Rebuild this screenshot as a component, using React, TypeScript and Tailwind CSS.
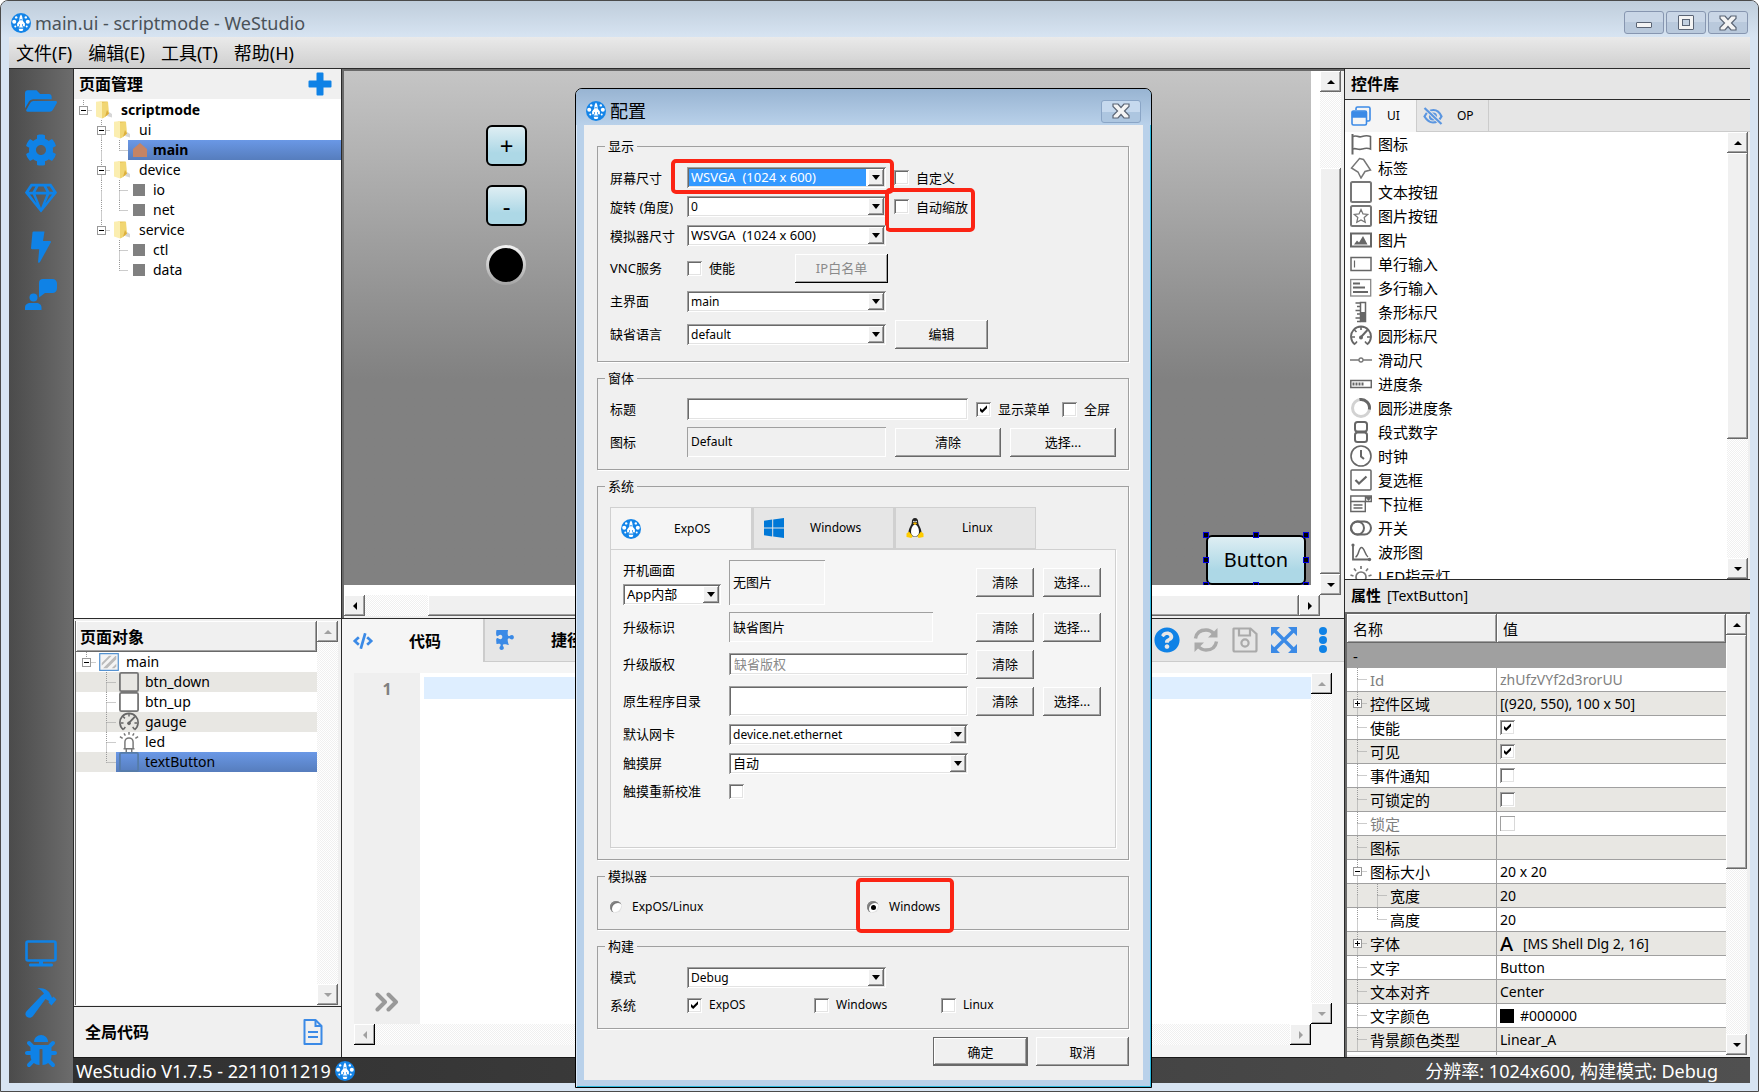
import React, { useState } from 'react';
import clsx from 'clsx';
import { FaFolderOpen, FaCog, FaRegGem, FaHammer, FaBug, FaPuzzlePiece, FaQuestionCircle, FaCode } from 'react-icons/fa';

const SUNKEN = 'shadow-[inset_1px_1px_0_#a0a0a0,inset_-1px_-1px_0_#fff,inset_2px_2px_0_#696969,inset_-2px_-2px_0_#e3e3e3]';
const SUNKEN_THIN = 'shadow-[inset_1px_1px_0_#a0a0a0,inset_-1px_-1px_0_#fff]';
const SUNKEN_MUTED = 'shadow-[inset_1px_1px_0_#a0a0a0,inset_-1px_-1px_0_#d8d8d8]';
const RAISED = 'bg-[#f0f0f0] shadow-[inset_-1px_-1px_0_#696969,inset_1px_1px_0_#fff,inset_-2px_-2px_0_#a0a0a0]';
const RAISED_DARK = 'bg-[#f0f0f0] shadow-[inset_-1px_-1px_0_#000,inset_1px_1px_0_#fff,inset_-2px_-2px_0_#a0a0a0]';
const RAISED_DEFAULT = 'bg-[#f0f0f0] border border-[#696969] shadow-[inset_-1px_-1px_0_#696969,inset_1px_1px_0_#fff,inset_-2px_-2px_0_#a0a0a0]';
const DITHER = 'bg-[repeating-conic-gradient(#fff_0_25%,#f0f0f0_0_50%)] bg-[length:2px_2px]';

/* ---------- icons ---------- */

const Logo = ({ className = 'size-5' }: { className?: string }) => (
  <svg viewBox="0 0 20 20" className={className} aria-hidden="true">
    <circle cx="10" cy="10" r="10" fill="#1384e8" />
    <path d="M10 1.500c1.300 1.500 1.700 3.300 1.600 6l2.300 3v3L12.200 13v1.500H7.800V13l-1.700.5v-3l2.300-3c-.1-2.700.3-4.500 1.600-6z" fill="#fff" />
    <circle cx="10" cy="6.800" r=".8" fill="#1384e8" />
    <path d="M8.500 13.500v-2.500M11.500 13.500v-2.500" stroke="#1384e8" strokeWidth=".7" />
    <circle cx="5.200" cy="4.400" r="1.200" fill="#fff" />
    <circle cx="14.800" cy="4.400" r="1.200" fill="#fff" />
    <circle cx="3.200" cy="8.800" r="2" fill="#fff" />
    <circle cx="16.800" cy="8.800" r="2" fill="#fff" />
    <circle cx="4.300" cy="13.500" r="1" fill="#fff" />
    <circle cx="15.700" cy="13.500" r="1" fill="#fff" />
    <path d="M7.600 15.800h4.800L11.500 18h-3z" fill="#fff" />
  </svg>
);

const Arrow = ({ dir, muted }: { dir: string; muted?: boolean }) => (
  <svg viewBox="0 0 10 10" className="size-[10px]" fill={muted ? '#a0a0a0' : '#000'} aria-hidden="true">
    {dir === 'up' && <path d="M1 7l4-4 4 4z" />}
    {dir === 'down' && <path d="M1 3l4 4 4-4z" />}
    {dir === 'left' && <path d="M7 1L3 5l4 4z" />}
    {dir === 'right' && <path d="M3 1l4 4-4 4z" />}
  </svg>
);

const FolderIcon = () => (
  <svg viewBox="0 0 18 18" className="size-[18px]" aria-hidden="true">
    <path d="M12 15l5 1.500V13l-3-2z" fill="#bbb" opacity=".6" />
    <path d="M5 .5h7.500V14L7 17V3z" fill="#e8c65a" />
    <path d="M1 .8L7 0v17.500L1 15.500z" fill="#fbeeb0" />
    <path d="M7 2l6-1.200 1 11.700-5 4.300L7 17.500z" fill="#f1d673" />
    <path d="M12 9l2 3.500-4 3.500z" fill="#dcae3d" />
  </svg>
);

const HouseIcon = () => (
  <svg viewBox="0 0 14 14" className="size-[14px]" aria-hidden="true">
    <path d="M7 0l7 6v8H0V6z" fill="#c58464" />
  </svg>
);

const BoltIcon = () => (
  <svg viewBox="0 0 32 32" className="size-8" fill="currentColor" aria-hidden="true">
    <path d="M8.500.5h11L18 10h7.200a.8.8 0 0 1 .7 1.200L15 31c-.6 1.200-2 1-1.900-.2L14.200 18.200H7a1 1 0 0 1-1-1.200L7.500 1.300a1 1 0 0 1 1-.8z" />
  </svg>
);

const FeedbackIcon = () => (
  <svg viewBox="0 0 32 32" className="size-8" fill="currentColor" aria-hidden="true">
    <path d="M18 0h9.500A4.500 4.500 0 0 1 32 4.500v5a4.500 4.500 0 0 1-4.500 4.500H20l-6 4.500V4a4 4 0 0 1 4-4z" />
    <circle cx="8.500" cy="18.500" r="4" />
    <path d="M0 31v-2.500C0 25.500 2.500 24 5 24h6.500c2.500 0 5 1.500 5 4.500V31z" />
  </svg>
);

const DisplayIcon = () => (
  <svg viewBox="0 0 32 28" className="w-8 h-7" aria-hidden="true">
    <rect x="1.500" y="1.500" width="29" height="19" rx="1.500" fill="none" stroke="currentColor" strokeWidth="2.600" />
    <path d="M14 20h4v3.500h8.500c1 0 1.500.6 1.500 1.500s-.5 1.500-1.500 1.500h-21C4.500 26.500 4 26 4 25s.5-1.500 1.500-1.500H14z" fill="currentColor" />
  </svg>
);

const GaugeShape = () => (
  <g fill="none" stroke="#666">
    <path d="M5 19.500A10 10 0 1 1 17 19.500" strokeWidth="1.800" />
    <path d="M11 2v3M4.500 5l2 2M2 12h3M20 12h-3M5 19l2-2.500M17 19l-2-2.500" strokeWidth="1.600" />
    <path d="M17.500 5L11 12" strokeWidth="2" />
    <circle cx="11" cy="12.500" r="2" fill="#666" stroke="none" />
  </g>
);

const LedShape = () => (
  <g fill="none" stroke="#777" strokeWidth="1.600">
    <path d="M6.500 18V11a4.500 4.500 0 0 1 9 0v7M5 18.500h12M8 19v3M14 19v3" />
    <path d="M11 0v3M5.500 1.500L7 4M16.500 1.500L15 4M1 5l3 2M21 5l-3 2" />
  </g>
);

const shapes: Record<string, React.ReactNode> = {
  flag: (
    <g fill="none" stroke="#666" strokeWidth="1.600">
      <path d="M2.500 1v20.500" strokeWidth="2" />
      <path d="M3 3.500c3-2 5 1.500 9 0 3-1 5-1.500 8.500 0V16c-3.500-1.500-5-1-8.500 0-4 1.500-6-1.500-9 0" />
    </g>
  ),
  tag: <path d="M9.500 1.500l4 1L20.500 13l-5.500 1.500-4 6.500-3-6L1.500 11z" fill="none" stroke="#777" strokeWidth="1.500" />,
  button: <rect x="1" y="1" width="20" height="20" rx="1.500" fill="none" stroke="#777" strokeWidth="2" />,
  imageButton: (
    <g fill="none" stroke="#777">
      <rect x="1" y="1" width="20" height="20" rx="1.500" strokeWidth="2" />
      <path d="M11 4.500l2 4.400 4.700.5-3.500 3.200 1 4.700-4.200-2.400-4.200 2.400 1-4.700-3.500-3.200 4.700-.5z" strokeWidth="1.300" />
    </g>
  ),
  image: (
    <g>
      <rect x="1" y="4.500" width="20" height="13" fill="none" stroke="#666" strokeWidth="2" />
      <path d="M4 15.500l3-4 2 2L13 7l4.500 8.500z" fill="#666" />
    </g>
  ),
  input: (
    <g fill="none" stroke="#666" strokeWidth="1.500">
      <rect x="1" y="4.500" width="20" height="13" />
      <path d="M4.500 7.500v7" strokeWidth="1.200" />
    </g>
  ),
  textarea: (
    <g>
      <rect x=".7" y="2.500" width="20" height="16.500" fill="none" stroke="#888" strokeWidth="1.300" />
      <path d="M3 6.500h7M3 10.500h12M3 15h15" stroke="#666" strokeWidth="2" />
    </g>
  ),
  ruler: (
    <g>
      <path d="M10.500 1.500h5v19h-5z" fill="none" stroke="#666" strokeWidth="1.500" />
      <path d="M11 11h4.500v10H11z" fill="#666" />
      <path d="M5.500 2h5M7 5.500h3.500M5.500 9.500h5M7 13h3.500M5.500 17h5M7 20.500h3.500" stroke="#666" strokeWidth="1.500" />
    </g>
  ),
  gauge: <GaugeShape />,
  slider: (
    <g fill="none" stroke="#777" strokeWidth="1.300">
      <path d="M0 11h9M13 11h9" />
      <circle cx="11" cy="11" r="2" />
    </g>
  ),
  progress: (
    <g>
      <rect x=".8" y="7.500" width="20.500" height="7" fill="none" stroke="#666" strokeWidth="1.500" />
      <path d="M3.500 9.500v3M6.500 9.500v3M9.500 9.500v3M12.500 9.500v3" stroke="#666" strokeWidth="2" />
    </g>
  ),
  ring: (
    <g fill="none" strokeWidth="3">
      <circle cx="11" cy="11" r="8.500" stroke="#d2d2d2" />
      <path d="M9.500 2.600A8.500 8.500 0 0 1 19.400 12.500" stroke="#666" />
    </g>
  ),
  segment: (
    <g fill="none" stroke="#666" strokeWidth="2">
      <rect x="5" y="1" width="12" height="9.500" rx="2.500" />
      <rect x="5" y="11.500" width="12" height="9.500" rx="2.500" />
    </g>
  ),
  clock: (
    <g fill="none" stroke="#666" strokeWidth="1.600">
      <circle cx="11" cy="11" r="10" />
      <path d="M11 5v6.500l3 2.500" strokeWidth="2" />
    </g>
  ),
  checkbox: (
    <g fill="none" stroke="#666">
      <rect x="1" y="1" width="20" height="20" rx="1" strokeWidth="1.500" />
      <path d="M5.500 11l3.500 3.500 7.500-7" strokeWidth="2.200" />
    </g>
  ),
  dropdown: (
    <g fill="none" stroke="#666" strokeWidth="1.400">
      <path d="M.8 3h20.500v5.500H.8z" />
      <path d="M.8 8.500v10h14.500v-10M3.500 12h9M3.500 15h9M15.500 3v5.500" />
      <path d="M16 4h5l-2.500 3z" fill="#666" />
    </g>
  ),
  toggle: (
    <g fill="none" stroke="#666" strokeWidth="2">
      <rect x="1" y="4.500" width="20" height="13" rx="6.500" />
      <circle cx="7.500" cy="11" r="6.500" />
    </g>
  ),
  chart: (
    <g fill="none" stroke="#666" strokeWidth="1.500">
      <path d="M3 4v14.500h17" strokeWidth="1.800" />
      <path d="M5.500 16c3.500-1 3-9.500 6-9.500s3 7 6.500 9.500" />
      <circle cx="3" cy="4" r="1.600" fill="#666" stroke="none" />
      <circle cx="19.500" cy="18.500" r="1.700" fill="#666" stroke="none" />
    </g>
  ),
  light: (
    <g fill="none" stroke="#777" strokeWidth="1.700">
      <circle cx="11" cy="12" r="5" />
      <path d="M11 1v3M4 3.500l2 2.500M18 3.500L16 6M.5 10l3 1M21.500 10l-3 1" />
    </g>
  ),
  led: <LedShape />,
  page: (
    <g>
      <rect x=".8" y="1.800" width="20.400" height="18.400" fill="#f4f4f4" stroke="#4f8fcf" strokeWidth="1.300" />
      <path d="M3 12L11 4h3L3 15zM4.500 18L18 4.500h1V8L9 18zM14 18l5-5v3l-2 2z" fill="#bbb" />
    </g>
  ),
  buttonBlue: <rect x="1" y="1" width="20" height="20" rx="1.500" fill="none" stroke="#567ca8" strokeWidth="2" />,
};

const Glyph = ({ name, className = 'size-[22px]' }: { name: string; className?: string }) => (
  <svg viewBox="0 0 22 22" className={className} aria-hidden="true">
    {shapes[name]}
  </svg>
);

const CloseGlyph = () => (
  <svg viewBox="0 0 18 16" className="w-[18px] h-4" aria-hidden="true">
    <path d="M1 1h5l3 3.500L12 1h5v2.500L12.500 8l4.500 4.500V15h-5l-3-3.500L6 15H1v-2.500L5.500 8 1 3.500z" fill="#f4f4f4" stroke="#5a6474" strokeWidth="1.200" />
  </svg>
);

/* ---------- shared controls ---------- */

type ScrollProps = { vertical?: boolean; muted?: boolean; dark?: boolean; before?: string; thumb?: string; after?: string };

const ScrollBar = ({ vertical, muted, dark, before, thumb, after }: ScrollProps) => {
  const btn = clsx('size-[21px] shrink-0 flex items-center justify-center', dark ? RAISED_DARK : RAISED);
  return (
    <div className={clsx('flex shrink-0', DITHER, vertical ? 'flex-col w-[21px]' : 'h-[21px]')}>
      <button type="button" aria-label={vertical ? 'up' : 'left'} className={btn}>
        <Arrow dir={vertical ? 'up' : 'left'} muted={muted} />
      </button>
      {before && <div className={before} />}
      {thumb && <div className={clsx(RAISED, thumb)} />}
      {after && <div className={after} />}
      <button type="button" aria-label={vertical ? 'down' : 'right'} className={btn}>
        <Arrow dir={vertical ? 'down' : 'right'} muted={muted} />
      </button>
    </div>
  );
};

const Check = ({ id, checked, disabled }: { id: string; checked?: boolean; disabled?: boolean }) => (
  <span className="relative inline-flex size-[15px] shrink-0">
    <input
      id={id}
      type="checkbox"
      defaultChecked={checked}
      disabled={disabled}
      className={clsx('peer appearance-none size-[15px] bg-white', disabled ? SUNKEN_MUTED : SUNKEN)}
    />
    <svg viewBox="0 0 15 15" className="absolute inset-0 hidden peer-checked:block pointer-events-none" aria-hidden="true">
      <path d="M4 6v3l2.200 2L11 6.200v-3L6.200 8z" fill="#000" />
    </svg>
  </span>
);

const LabeledCheck = ({ id, text, checked, className }: { id: string; text: string; checked?: boolean; className?: string }) => (
  <label htmlFor={id} className={clsx('flex items-center gap-[7px]', className)}>
    <Check id={id} checked={checked} />
    {text}
  </label>
);

const Radio = ({ id, text, checked }: { id: string; text: string; checked?: boolean }) => (
  <label htmlFor={id} className="relative flex items-center gap-[10px] h-5 text-xs">
    <span className="relative inline-flex size-3">
      <input
        id={id}
        type="radio"
        name="simulator"
        defaultChecked={checked}
        className="peer appearance-none size-3 rounded-full bg-white shadow-[inset_1px_1px_0_#888,inset_2px_2px_0_#777,inset_-1px_-1px_0_#e3e3e3]"
      />
      <span className="absolute left-1 top-1 size-[5px] rounded-full bg-black hidden peer-checked:block" />
    </span>
    {text}
    {checked && <span className="absolute -left-[11px] -right-[14px] -top-[19px] -bottom-4 border-4 border-[#fb2414] rounded-[5px] pointer-events-none" />}
  </label>
);

const Combo = ({ id, value, className, active }: { id: string; value: string; className: string; active?: boolean }) => (
  <span className={clsx('relative flex h-[21px] p-[2px] bg-white', SUNKEN, className)}>
    <select
      id={id}
      defaultValue={value}
      className={clsx('appearance-none flex-1 min-w-0 leading-[17px] outline-none pl-[2px] mr-[18px]', active ? 'bg-[#3399ff] text-white' : 'bg-transparent')}
    >
      <option>{value}</option>
    </select>
    <span className={clsx('absolute right-[2px] top-[2px] bottom-[2px] w-4 flex items-center justify-center pointer-events-none', RAISED)}>
      <svg viewBox="0 0 8 5" className="w-2 h-[5px]" aria-hidden="true">
        <path d="M0 0h8L4 5z" />
      </svg>
    </span>
  </span>
);

const PushButton = ({ text, className, kind = RAISED, disabled }: { text: string; className: string; kind?: string; disabled?: boolean }) => (
  <button type="button" disabled={disabled} className={clsx('h-[29px] shrink-0', kind, className, disabled && 'text-[#8a8a8a]')}>
    {text}
  </button>
);

const Group = ({ title, className, children }: { title: string; className?: string; children: React.ReactNode }) => (
  <fieldset className={clsx('border border-[#a0a0a0] min-w-0 px-3 shadow-[1px_1px_0_#fff]', className)}>
    <legend className="-ml-[5px] px-[3px] leading-4">{title}</legend>
    {children}
  </fieldset>
);

const Row = ({ label, htmlFor, h, wide, children }: { label: string; htmlFor?: string; h: string; wide?: boolean; children: React.ReactNode }) => (
  <div className={clsx('flex items-center', h)}>
    <label htmlFor={htmlFor} className={clsx('shrink-0', wide ? 'w-[106px]' : 'w-[77px]')}>{label}</label>
    {children}
  </div>
);

/* ---------- tree ---------- */

type GuideProps = { h: number; w: number; up?: boolean; down?: boolean; across?: boolean; box?: 'plus' | 'minus' };

const Guide = ({ h, w, up, down, across, box }: GuideProps) => {
  const cx = Math.floor(w / 2) + 0.5;
  const cy = Math.floor(h / 2) + 0.5;
  return (
    <svg width={w} height={h} className="shrink-0" aria-hidden="true">
      <g stroke="#999" strokeDasharray="1 1">
        {up && <path d={`M${cx} 0V${cy}`} />}
        {down && <path d={`M${cx} ${cy}V${h}`} />}
        {across && <path d={`M${cx} ${cy}H${w}`} />}
      </g>
      {box && (
        <g fill="#fff" stroke="#999">
          <rect x={cx - 4} y={cy - 4} width="8" height="8" />
          <path d={`M${cx - 2.5} ${cy}h5`} stroke="#000" />
          {box === 'plus' && <path d={`M${cx} ${cy - 2.5}v5`} stroke="#000" />}
        </g>
      )}
    </svg>
  );
};

const pageTree = [
  { name: 'scriptmode', level: 0, bold: true },
  { name: 'ui', level: 1, more: true },
  { name: 'main', level: 2, more: true, last: true, bold: true, selected: true },
  { name: 'device', level: 1, more: true },
  { name: 'io', level: 2, more: true },
  { name: 'net', level: 2, more: true, last: true },
  { name: 'service', level: 1, more: false },
  { name: 'ctl', level: 2, more: false },
  { name: 'data', level: 2, more: false, last: true },
];

const PageTree = () => (
  <ul className="flex-1 bg-white text-sm pt-px">
    {pageTree.map((n) => (
      <li key={n.name} className="flex h-5">
        {n.level === 0 ? (
          <Guide w={18} h={20} up across box="minus" />
        ) : (
          <span className="w-[18px] shrink-0" />
        )}
        {n.level === 1 && <Guide w={18} h={20} up down={n.more} across box="minus" />}
        {n.level === 2 && (
          <>
            <Guide w={18} h={20} up={n.more} down={n.more} />
            <Guide w={18} h={20} up down={!n.last} across />
          </>
        )}
        <div className={clsx('flex-1 flex items-center', n.selected && 'bg-linear-to-b from-[#6a98e6] to-[#567dbd]')}>
          {n.level < 2 ? (
            <span className="w-[29px] pl-[3px]"><FolderIcon /></span>
          ) : (
            <span className="w-[25px] pl-[5px]">
              {n.selected ? <HouseIcon /> : <span className="block size-3 bg-[#808080]" />}
            </span>
          )}
          <span className={clsx(n.bold && 'font-bold')}>{n.name}</span>
        </div>
      </li>
    ))}
  </ul>
);

const objects = [
  { name: 'btn_down', icon: 'button' },
  { name: 'btn_up', icon: 'button' },
  { name: 'gauge', icon: 'gauge' },
  { name: 'led', icon: 'led' },
  { name: 'textButton', icon: 'buttonBlue' },
];

const ObjectTree = () => (
  <ul className="text-sm">
    <li className="flex h-5">
      <Guide w={20} h={20} up across box="minus" />
      <span className="w-[30px] pl-[3px] flex items-center"><Glyph name="page" className="size-5" /></span>
      main
    </li>
    {objects.map((o, i) => (
      <li key={o.name} className={clsx('flex h-5', i % 2 === 0 && 'bg-[#e8e7e3]')}>
        <span className="w-5" />
        <Guide w={20} h={20} up down={i < 4} across />
        <div className={clsx('flex-1 flex items-center', o.name === 'textButton' && 'bg-linear-to-b from-[#6a98e6] to-[#567dbd]')}>
          <span className="w-[29px] pl-[3px]"><Glyph name={o.icon} className="size-5" /></span>
          {o.name}
        </div>
      </li>
    ))}
  </ul>
);

const LeftPanel = () => (
  <section className="w-[269px] shrink-0 flex flex-col border-x border-[#2a2a2a] bg-[#f0f0f0]">
    <div className="h-[30px] flex items-center justify-between pl-[5px] pr-[9px]">
      <h2 className="text-base font-bold">页面管理</h2>
      <button type="button" aria-label="add" className="text-[#0f82e6]">
        <svg viewBox="0 0 24 24" className="size-6" fill="currentColor" aria-hidden="true">
          <path d="M8.500 1.500a1 1 0 0 1 1-1h5a1 1 0 0 1 1 1v7h7a1 1 0 0 1 1 1v5a1 1 0 0 1-1 1h-7v7a1 1 0 0 1-1 1h-5a1 1 0 0 1-1-1v-7h-7a1 1 0 0 1-1-1v-5a1 1 0 0 1 1-1h7z" />
        </svg>
      </button>
    </div>
    <PageTree />
    <div className="h-[388px] border-t border-[#2a2a2a] pt-[2px] pl-px pr-[3px] pb-px flex bg-[#f0f0f0]">
      <div className="flex-1 bg-white border-l border-[#696969]">
        <div className={clsx('h-[31px] flex items-center pl-1', RAISED)}>
          <h2 className="text-base font-bold">页面对象</h2>
        </div>
        <ObjectTree />
      </div>
      <ScrollBar vertical muted after="flex-1" />
    </div>
    <div className="h-[51px] border-t border-[#2a2a2a] flex items-center justify-between pl-[11px] pr-[18px]">
      <h2 className="text-base font-bold">全局代码</h2>
      <button type="button" aria-label="global code">
        <svg viewBox="0 0 20 26" className="w-5 h-[26px]" fill="none" stroke="#3b8ae6" strokeWidth="2" aria-hidden="true">
          <path d="M1.500 1h11L18.500 7v18h-17z" strokeLinejoin="round" />
          <path d="M12.500 1v6h6M5 13h10M5 18h10" />
        </svg>
      </button>
    </div>
  </section>
);

/* ---------- center ---------- */

const handlePos = [
  '-left-[3px] -top-[3px]', 'left-[47px] -top-[3px]', '-right-[3px] -top-[3px]',
  '-left-[3px] top-[22px]', '-right-[3px] top-[22px]',
  '-left-[3px] -bottom-[3px]', 'left-[47px] -bottom-[3px]', '-right-[3px] -bottom-[3px]',
];

const stageButton = 'absolute border-2 border-black rounded-md bg-linear-to-b from-[#deeef3] via-[#add8e6] via-70% to-[#add8e6] leading-none';

const Designer = () => (
  <div className="flex-1 min-h-0 flex flex-col border-t-2 border-l-2 border-[#696969] bg-[#f0f0f0] pr-[3px] pb-[2px]">
    <div className="flex-1 flex min-h-0">
      <div className="flex-1 bg-white pr-[9px] pb-[10px] flex">
        <div className="relative flex-1 overflow-hidden bg-linear-to-b from-[#c5c5c5] to-[#818181] to-60%">
          <button type="button" className={clsx(stageButton, 'left-[142px] top-[54px] size-[41px] text-2xl/6')}>+</button>
          <button type="button" className={clsx(stageButton, 'left-[142px] top-[114px] size-[41px] text-2xl/6')}>-</button>
          <div className="absolute left-[142px] top-[174px] size-10 rounded-full bg-linear-to-b from-[#f4f4f4] to-[#a4a4a4] p-[3px]">
            <div className="size-full rounded-full bg-black" />
          </div>
          <div className="absolute right-[5px] bottom-0 w-[100px] h-[50px]">
            <button type="button" className={clsx(stageButton, 'inset-0 text-xl')}>Button</button>
            {handlePos.map((p) => (
              <span key={p} className={clsx('absolute size-[6px] bg-black border border-[#0000e0]', p)} />
            ))}
          </div>
        </div>
      </div>
      <ScrollBar vertical before="h-[76px]" thumb="flex-1" />
    </div>
    <div className="flex">
      <div className="flex-1 grid"><ScrollBar before="w-[63px]" thumb="flex-1" /></div>
      <div className="size-[21px]" />
    </div>
  </div>
);

const toolButton = 'size-[26px] flex items-center justify-center';

const CodePanel = () => (
  <div className="h-[439px] shrink-0 flex flex-col border-t border-[#2a2a2a] bg-[#f5f5f5]">
    <div className="h-[43px] flex bg-[#e6e6e6]">
      <button type="button" className="w-[141px] flex items-center pl-[11px] gap-9 bg-[#f5f5f5] text-base font-bold">
        <FaCode className="size-5 text-[#3b8ae6]" />代码
      </button>
      <button type="button" className="w-[141px] flex items-center pl-[10px] gap-9 border-l-2 border-b border-[#ccc] text-base font-bold">
        <FaPuzzlePiece className="size-5 rotate-90 text-[#3b8ae6]" />捷径
      </button>
      <div className="flex-1 flex items-center justify-end gap-[13px] pr-2 border-b border-[#ccc]">
        <button type="button" aria-label="help" className={toolButton}><FaQuestionCircle className="size-[26px] text-[#0f82e6]" /></button>
        <button type="button" aria-label="refresh" className={toolButton}>
          <svg viewBox="0 0 26 26" className="size-[26px]" fill="none" stroke="#aaa" strokeWidth="3.400" aria-hidden="true">
            <path d="M2.500 11.500C3.500 5.500 8 3 13 3c3.500 0 6 1.500 8 4M23.500 14.500C22.500 20.500 18 23 13 23c-3.500 0-6-1.500-8-4" />
            <path d="M24.500 1v9.500H15zM1.500 25v-9.500H11z" fill="#aaa" stroke="none" />
          </svg>
        </button>
        <button type="button" aria-label="save" className={toolButton}>
          <svg viewBox="0 0 26 26" className="size-[26px]" fill="none" stroke="#aaa" strokeWidth="2.200" aria-hidden="true">
            <path d="M2 1.500h16.500L24.500 7v16a1.500 1.500 0 0 1-1.500 1.500H3A1.500 1.500 0 0 1 1.500 23V2z" />
            <path d="M7 2v6.500h11V2" />
            <circle cx="13" cy="16" r="3.600" />
          </svg>
        </button>
        <button type="button" aria-label="expand" className={toolButton}>
          <svg viewBox="0 0 26 26" className="size-[26px]" aria-hidden="true">
            <path d="M4 4l18 18M22 4L4 22" stroke="#3b8ae6" strokeWidth="3.400" />
            <path d="M0 0h9L0 9zM26 0v9l-9-9zM0 26v-9l9 9zM26 26h-9l9-9z" fill="#3b8ae6" />
          </svg>
        </button>
        <button type="button" aria-label="more" className={toolButton}>
          <svg viewBox="0 0 26 26" className="size-[26px]" fill="#0f82e6" aria-hidden="true">
            <circle cx="13" cy="4" r="4" /><circle cx="13" cy="13" r="4" /><circle cx="13" cy="22" r="4" />
          </svg>
        </button>
      </div>
    </div>
    <div className="flex-1 flex flex-col pl-3 pr-3 pt-[11px] pb-3">
      <div className="flex-1 flex">
        <div className="w-[66px] bg-[#efefef] flex flex-col items-center justify-between pt-1 pb-3">
          <span className="font-bold text-base text-[#808080]">1</span>
          <svg viewBox="0 0 24 20" className="w-6 h-5" fill="none" stroke="#999" strokeWidth="4" strokeLinecap="round" strokeLinejoin="round" aria-hidden="true">
            <path d="M2.500 2.500L10 10l-7.500 7.500M13.500 2.500L21 10l-7.500 7.500" />
          </svg>
        </div>
        <div className="flex-1 bg-white pt-1 pl-1"><div className="h-[22px] bg-[#deeeff]" /></div>
        <ScrollBar vertical muted dark after="flex-1" />
      </div>
      <div className="flex">
        <div className="flex-1 grid"><ScrollBar muted dark after="flex-1" /></div>
        <div className="size-[21px]" />
      </div>
    </div>
  </div>
);

/* ---------- right ---------- */

const widgets = [
  ['flag', '图标'], ['tag', '标签'], ['button', '文本按钮'], ['imageButton', '图片按钮'], ['image', '图片'],
  ['input', '单行输入'], ['textarea', '多行输入'], ['ruler', '条形标尺'], ['gauge', '圆形标尺'], ['slider', '滑动尺'],
  ['progress', '进度条'], ['ring', '圆形进度条'], ['segment', '段式数字'], ['clock', '时钟'], ['checkbox', '复选框'],
  ['dropdown', '下拉框'], ['toggle', '开关'], ['chart', '波形图'], ['light', 'LED指示灯'],
];

type Prop = { name: string; value?: string; check?: boolean; muted?: boolean; box?: 'plus' | 'minus'; child?: boolean; last?: boolean; font?: boolean; swatch?: boolean };

const props: Prop[] = [
  { name: 'Id', value: 'zhUfzVYf2d3rorUU', muted: true },
  { name: '控件区域', value: '[(920, 550), 100 x 50]', box: 'plus' },
  { name: '使能', check: true },
  { name: '可见', check: true },
  { name: '事件通知', check: false },
  { name: '可锁定的', check: false },
  { name: '锁定', check: false, muted: true },
  { name: '图标' },
  { name: '图标大小', value: '20 x 20', box: 'minus' },
  { name: '宽度', value: '20', child: true },
  { name: '高度', value: '20', child: true, last: true },
  { name: '字体', value: '[MS Shell Dlg 2, 16]', box: 'plus', font: true },
  { name: '文字', value: 'Button' },
  { name: '文本对齐', value: 'Center' },
  { name: '文字颜色', value: '#000000', swatch: true },
  { name: '背景颜色类型', value: 'Linear_A' },
];

const PropertyTable = () => (
  <table className="w-full table-fixed border-separate border-spacing-0 text-[15px] leading-5">
    <thead>
      <tr className="h-[29px] text-left">
        <th className={clsx('w-[150px] pl-[6px] font-normal', RAISED)}>名称</th>
        <th className={clsx('pl-[6px] font-normal', RAISED)}>值</th>
      </tr>
    </thead>
    <tbody>
      <tr className="h-[25px] bg-[#a0a0a0]"><td colSpan={2} className="pl-[6px] py-0">-</td></tr>
      {props.map((p, i) => (
        <tr key={p.name} className={clsx('h-6', i % 2 === 1 && 'bg-[#e8e7e3]', p.muted && 'text-[#808080]')}>
          <td className="p-0 h-6 border-b border-r border-[#a0a0a0]">
            <div className="flex items-center h-[23px]">
              <Guide w={20} h={23} up down across={!p.child} box={p.box} />
              {p.child && <Guide w={20} h={23} up down={!p.last} across />}
              {p.check !== undefined ? (
                <label htmlFor={`prop-${i}`} className="pl-[3px]">{p.name}</label>
              ) : (
                <span className="pl-[3px]">{p.name}</span>
              )}
            </div>
          </td>
          <td className="p-0 h-6 pl-[3px] border-b border-[#a0a0a0] text-sm">
            <div className="flex items-center h-[23px]">
              {p.check !== undefined && <Check id={`prop-${i}`} checked={p.check} disabled={p.muted} />}
              {p.font && <span className="w-[23px] text-xl/5 font-medium">A</span>}
              {p.swatch && <span className="size-[14px] bg-black mr-[6px]" />}
              {p.value}
            </div>
          </td>
        </tr>
      ))}
      <tr className="h-1"><td className="border-r border-[#a0a0a0]" /><td /></tr>
    </tbody>
  </table>
);

const RightPanel = () => (
  <aside className="w-[406px] shrink-0 flex flex-col border-l border-[#2a2a2a] bg-[#f0f0f0]">
    <h2 className="h-[31px] flex items-center pl-[6px] bg-[#e6e6e6] border-b border-[#2a2a2a] text-base font-bold">控件库</h2>
    <div className="h-8 flex bg-[#e6e6e6] text-xs">
      <button type="button" className="w-[71px] flex items-center pl-[6px] gap-4 bg-[#f5f5f5]">
        <svg viewBox="0 0 20 20" className="size-5" fill="none" stroke="#3b8ae6" strokeWidth="1.600" aria-hidden="true">
          <path d="M5 4V2.500C5 1.500 5.500 1 6.500 1h11c1 0 1.500.5 1.500 1.500v11c0 1-.5 1.500-1.500 1.500H16" />
          <rect x="1" y="5" width="14.500" height="14" rx="1.500" />
          <path d="M1.500 6h13.500v5h-13.500z" fill="#3b8ae6" />
        </svg>
        UI
      </button>
      <button type="button" className="w-[73px] flex items-center pl-[6px] gap-[14px] border-x border-b border-[#ccc]">
        <svg viewBox="0 0 20 18" className="w-5 h-[18px]" fill="none" stroke="#5b96e0" strokeWidth="2.200" aria-hidden="true">
          <path d="M1.500 9.500C4 4.500 7 3 10.500 3S17 6 18.500 9.500C16 14 13 15.500 10 15.500S4 13.500 1.500 9.500z" />
          <circle cx="10" cy="9.500" r="3" />
          <path d="M1.500 1l17 16" stroke="#e6e6e6" strokeWidth="4" />
          <path d="M1.500 1l17 16" />
        </svg>
        OP
      </button>
      <div className="flex-1 border-b border-[#ccc]" />
    </div>
    <div className="h-[447px] shrink-0 flex pr-[2px]">
      <ul className="flex-1 bg-white overflow-hidden text-[15px]">
        {widgets.map(([icon, name]) => (
          <li key={name} className="h-6 flex items-center pl-[5px] gap-[6px]">
            <Glyph name={icon} />
            {name}
          </li>
        ))}
      </ul>
      <ScrollBar vertical thumb="h-[286px]" after="flex-1" />
    </div>
    <h2 className="h-[33px] flex items-center gap-[6px] pl-[6px] bg-[#e6e6e6] border-t border-[#2a2a2a] text-sm">
      <b className="text-[15px]">属性</b> [TextButton]
    </h2>
    <div className="flex-1 min-h-0 flex border-t-2 border-l-2 border-[#696969] pr-[3px] pb-[2px]">
      <div className="flex-1 bg-white overflow-hidden"><PropertyTable /></div>
      <ScrollBar vertical thumb="h-[234px]" after="flex-1" />
    </div>
  </aside>
);

/* ---------- settings dialog ---------- */

const WindowsIcon = () => (
  <svg viewBox="0 0 20 20" className="size-5" fill="#0078d7" aria-hidden="true">
    <path d="M0 2.800L8.200 1.600v7.900H0zM9.200 1.500L20 0v9.500H9.200zM0 10.500h8.200v7.900L0 17.200zM9.200 10.500H20V20L9.200 18.500z" />
  </svg>
);

const TuxIcon = () => (
  <svg viewBox="0 0 18 20" className="w-[18px] h-5" aria-hidden="true">
    <path d="M9 0c2.200 0 3.200 1.600 3.200 4.500 0 2.500 3.300 5.500 3.300 10 0 3-2.500 4-6.500 4s-6.500-1-6.500-4c0-4.500 3.300-7.500 3.300-10C5.800 1.600 6.800 0 9 0z" fill="#222" />
    <path d="M9 6.500c2.200 0 4 4 4 7.500 0 3-1.800 4.300-4 4.300S5 17 5 14c0-3.500 1.800-7.500 4-7.500z" fill="#fff" />
    <circle cx="7.900" cy="3.600" r=".8" fill="#fff" /><circle cx="10.100" cy="3.600" r=".8" fill="#fff" />
    <path d="M6.800 5.200L9 4.300l2.200.9L9 7z" fill="#f5b800" />
    <path d="M.5 15.500l2.500-2 3.500 4.500-1 2-5-1zM17.500 15.500l-2.500-2-3.500 4.500 1 2 5-1z" fill="#fc0" />
  </svg>
);

const tabs = [
  { name: 'ExpOS', icon: <Logo />, pad: 'gap-[33px]' },
  { name: 'Windows', icon: <WindowsIcon />, pad: 'gap-[26px]' },
  { name: 'Linux', icon: <TuxIcon />, pad: 'gap-[38px]' },
];

const SystemTabs = () => {
  const [tab, setTab] = useState('ExpOS');
  return (
    <>
      <div className="flex text-xs" role="tablist">
        {tabs.map((t) => (
          <button
            key={t.name}
            type="button"
            role="tab"
            aria-selected={tab === t.name}
            onClick={() => setTab(t.name)}
            className={clsx(
              'w-[142px] h-[42px] flex items-center pl-[10px] border border-[#d0d0d0]',
              t.pad,
              tab === t.name ? 'relative -mb-px border-b-0 bg-[#f5f5f5]' : 'bg-[#e6e6e6] border-l-2'
            )}
          >
            {t.icon}
            {t.name}
          </button>
        ))}
      </div>
      <div className="border border-[#d0d0d0] bg-[#f5f5f5] pl-3 pr-[14px] pt-[5px] pb-[42px] shadow-[1px_1px_0_#fff]">
        <div className="flex items-center h-[54px]">
          <div className="w-[106px] flex flex-col gap-[6px] pt-[2px]">
            <label htmlFor="boot">开机画面</label>
            <Combo id="boot" value="App内部" className="w-[98px]" />
          </div>
          <div className={clsx('w-24 h-[45px] flex items-center pl-1', SUNKEN_THIN)}>无图片</div>
          <PushButton text="清除" className="w-[58px] ml-auto" />
          <PushButton text="选择..." className="w-[58px] ml-[9px]" />
        </div>
        <Row label="升级标识" h="h-9" wide>
          <div className={clsx('w-[204px] h-[30px] flex items-center pl-1', SUNKEN_THIN)}>缺省图片</div>
          <PushButton text="清除" className="w-[58px] ml-auto" />
          <PushButton text="选择..." className="w-[58px] ml-[9px]" />
        </Row>
        <Row label="升级版权" htmlFor="copyright" h="h-[38px]" wide>
          <input id="copyright" placeholder="缺省版权" className={clsx('w-[239px] h-[22px] px-[5px] bg-white placeholder:text-[#8a8a8a]', SUNKEN)} />
          <PushButton text="清除" className="w-[58px] ml-auto mr-[67px]" />
        </Row>
        <Row label="原生程序目录" htmlFor="native-dir" h="h-9" wide>
          <input id="native-dir" className={clsx('w-[239px] h-[30px] px-[5px] bg-white', SUNKEN)} />
          <PushButton text="清除" className="w-[58px] ml-auto" />
          <PushButton text="选择..." className="w-[58px] ml-[9px]" />
        </Row>
        <Row label="默认网卡" htmlFor="nic" h="h-[30px]" wide>
          <Combo id="nic" value="device.net.ethernet" className="w-[239px] text-xs" />
        </Row>
        <Row label="触摸屏" htmlFor="touch" h="h-7" wide>
          <Combo id="touch" value="自动" className="w-[239px]" />
        </Row>
        <Row label="触摸重新校准" htmlFor="recalibrate" h="h-7" wide>
          <Check id="recalibrate" />
        </Row>
      </div>
    </>
  );
};

const SettingsDialog = () => (
  <div role="dialog" aria-label="配置" className="w-[577px] border border-black rounded-t-[7px] bg-[#b9d1ea] shadow-[inset_1px_0_0_#dceafa,inset_-1px_-1px_0_#2fb8dd] text-[13px] leading-4">
    <div className="h-9 flex items-center justify-between px-[10px] rounded-t-md bg-linear-to-b from-[#98b4d2] to-[#b9d1ea]">
      <h1 className="flex items-center gap-1 text-lg pt-2"><Logo />配置</h1>
      <button type="button" aria-label="close" className="w-10 h-[23px] mt-2 flex items-center justify-center border border-[#8aa5c6] rounded-[3px] bg-linear-to-b from-[#c6d9ee] from-50% to-[#adc6e0] to-50%">
        <CloseGlyph />
      </button>
    </div>
    <form className="mx-2 mb-[7px] bg-[#f0f0f0] p-[13px] pr-[14px] flex flex-col gap-2">
      <Group title="显示" className="pt-[9px] pb-[9px]">
        <Row label="屏幕尺寸" htmlFor="screen" h="h-[29px]">
          <div className="relative">
            <Combo id="screen" value={'WSVGA\u00a0 (1024 x 600)'} className="w-[199px]" active />
            <span className="absolute -left-4 -right-[8px] -top-2 -bottom-[6px] border-4 border-[#fb2414] rounded-[5px] pointer-events-none z-10" />
          </div>
          <LabeledCheck id="custom" text="自定义" className="ml-2" />
        </Row>
        <Row label="旋转 (角度)" htmlFor="rotate" h="h-[29px]">
          <Combo id="rotate" value="0" className="w-[199px] text-xs" />
          <div className="relative ml-2">
            <LabeledCheck id="autoscale" text="自动缩放" />
            <span className="absolute -left-[9px] -right-[7px] -top-[11px] -bottom-[17px] border-4 border-[#fb2414] rounded-[5px] pointer-events-none" />
          </div>
        </Row>
        <Row label="模拟器尺寸" htmlFor="sim-size" h="h-[29px]">
          <Combo id="sim-size" value={'WSVGA\u00a0 (1024 x 600)'} className="w-[199px]" />
        </Row>
        <Row label="VNC服务" htmlFor="vnc" h="h-9">
          <LabeledCheck id="vnc" text="使能" className="w-[108px]" />
          <PushButton text="IP白名单" className="w-[93px]" kind={RAISED_DARK} disabled />
        </Row>
        <Row label="主界面" htmlFor="home" h="h-[30px]">
          <Combo id="home" value="main" className="w-[199px] text-xs" />
        </Row>
        <Row label="缺省语言" htmlFor="lang" h="h-9">
          <Combo id="lang" value="default" className="w-[199px] text-xs" />
          <PushButton text="编辑" className="w-[93px] ml-[9px]" />
        </Row>
      </Group>

      <Group title="窗体" className="pt-2 pb-[9px]">
        <Row label="标题" htmlFor="win-title" h="h-[30px]">
          <input id="win-title" className={clsx('w-[281px] h-[22px] px-[5px] bg-white', SUNKEN)} />
          <LabeledCheck id="show-menu" text="显示菜单" checked className="ml-2" />
          <LabeledCheck id="fullscreen" text="全屏" className="ml-3" />
        </Row>
        <Row label="图标" h="h-9">
          <div className={clsx('w-[199px] h-[30px] flex items-center pl-1 text-xs', SUNKEN_THIN)}>Default</div>
          <PushButton text="清除" className="w-[106px] ml-[9px]" />
          <PushButton text="选择..." className="w-[106px] ml-[9px]" />
        </Row>
      </Group>

      <Group title="系统" className="pt-[13px] pb-[11px]">
        <SystemTabs />
      </Group>

      <Group title="模拟器" className="pt-[13px] pb-[11px]">
        <div className="grid grid-cols-[257px_1fr] h-[21px] justify-items-start">
          <Radio id="sim-linux" text="ExpOS/Linux" />
          <Radio id="sim-windows" text="Windows" checked />
        </div>
      </Group>

      <Group title="构建" className="pt-2 pb-[10px]">
        <Row label="模式" htmlFor="mode" h="h-[30px]">
          <Combo id="mode" value="Debug" className="w-[199px] text-xs" />
        </Row>
        <Row label="系统" h="h-[26px]">
          <LabeledCheck id="b-expos" text="ExpOS" checked className="w-[127px] text-xs" />
          <LabeledCheck id="b-windows" text="Windows" className="w-[127px] text-xs" />
          <LabeledCheck id="b-linux" text="Linux" className="text-xs" />
        </Row>
      </Group>

      <div className="flex justify-end gap-2 h-[30px]">
        <PushButton text="确定" className="w-[95px]" kind={RAISED_DEFAULT} />
        <PushButton text="取消" className="w-[93px]" />
      </div>
    </form>
  </div>
);

/* ---------- app ---------- */

const winButton = 'w-10 h-[23px] flex items-center justify-center border border-[#8796b0] rounded-[3px] bg-linear-to-b from-[#c9d6e6] from-50% to-[#b9c9dc] to-50%';

const App = () => (
  <div className="relative h-screen flex flex-col overflow-hidden border border-[#4a4a4a] rounded-t-lg bg-[#d7e4f2] text-black font-['Noto_Sans','Noto_Sans_CJK_SC',sans-serif]">
    <header className="h-9 shrink-0 flex items-start justify-between pl-[10px] pr-[10px] bg-linear-to-b from-[#bfcddb] to-[#d7e4f2]">
      <div className="flex items-center gap-1 pt-2 text-lg text-[#4a5258]">
        <Logo />
        main.ui - scriptmode - WeStudio
      </div>
      <div className="flex gap-[2px] pt-[10px]">
        <button type="button" aria-label="minimize" className={winButton}>
          <span className="w-4 h-[6px] mt-1 rounded-[1px] border border-[#5a6474] bg-[#f4f4f4]" />
        </button>
        <button type="button" aria-label="maximize" className={winButton}>
          <span className="w-4 h-[15px] flex items-center justify-center rounded-[1px] border border-[#5a6474] bg-[#f4f4f4]">
            <span className="w-2 h-[7px] border border-[#5a6474] bg-[#c3d1e1]" />
          </span>
        </button>
        <button type="button" aria-label="close window" className={winButton}><CloseGlyph /></button>
      </div>
    </header>

    <div className="flex-1 min-h-0 flex flex-col mx-2 mb-2">
      <nav className="h-8 shrink-0 flex items-center gap-4 pl-[7px] border-b border-[#2a2a2a] bg-linear-to-b from-[#eaeaea] to-[#cfcfcf] text-lg">
        {['文件(F)', '编辑(E)', '工具(T)', '帮助(H)'].map((m) => (
          <button key={m} type="button">{m}</button>
        ))}
      </nav>
      <div className="flex-1 min-h-0 flex">
        <div className="w-16 shrink-0 flex flex-col items-center bg-linear-to-r from-[#4b4b4b] to-[#6c6c6c] text-[#0f82e6] pt-2 pb-2">
          <button type="button" aria-label="open" className="h-12 flex items-center"><FaFolderOpen className="size-8" /></button>
          <button type="button" aria-label="settings" className="h-[49px] flex items-center"><FaCog className="size-8" /></button>
          <button type="button" aria-label="resources" className="h-12 flex items-center"><FaRegGem className="size-8" /></button>
          <button type="button" aria-label="run" className="h-[49px] flex items-center"><BoltIcon /></button>
          <button type="button" aria-label="feedback" className="h-12 flex items-center"><FeedbackIcon /></button>
          <div className="flex-1" />
          <button type="button" aria-label="simulate" className="h-12 flex items-center"><DisplayIcon /></button>
          <button type="button" aria-label="build" className="h-[49px] flex items-center">
            <svg viewBox="0 0 32 30" className="w-8 h-[30px]" fill="currentColor" aria-hidden="true">
              <path d="M12.500.5C17-.5 21 .5 24 4l2.500 4.500.5 1.500 1.500-1.500 3 3-5 6-3-3 .5-1.500-3.500-2L8 28c-1.500 2-4 2.300-6 1-2-1.500-2-4-.5-5.800L16.500 7.500l2.500-1.800C17.500 3 15.500 1.500 12.500.5z" />
            </svg>
          </button>
          <button type="button" aria-label="debug" className="h-12 flex items-center"><FaBug className="size-8" /></button>
        </div>
        <div className="flex-1 min-w-0 flex flex-col">
          <div className="flex-1 min-h-0 flex">
            <LeftPanel />
            <main className="flex-1 min-w-0 flex flex-col">
              <Designer />
              <CodePanel />
            </main>
            <RightPanel />
          </div>
          <footer className="h-[26px] shrink-0 flex items-center justify-between pl-[3px] border-t border-[#1a1a1a] bg-linear-to-r from-[#303030] to-[#505050] text-white text-lg leading-6 overflow-hidden">
            <span className="flex items-center gap-1">
              WeStudio V1.7.5 - 2211011219
              <Logo />
            </span>
            <span className="pr-8">分辨率: 1024x600, 构建模式: Debug</span>
          </footer>
        </div>
      </div>
    </div>

    <div className="absolute inset-0 flex justify-center items-start pt-[87px] pr-8">
      <SettingsDialog />
    </div>
  </div>
);

export default App;
